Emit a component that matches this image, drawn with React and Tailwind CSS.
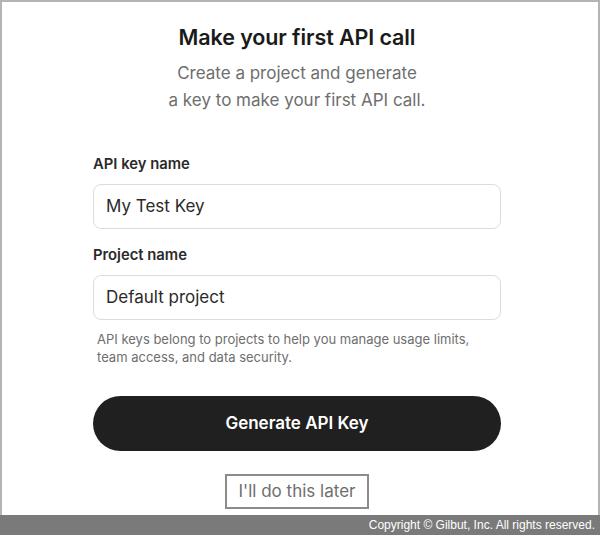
export default function App() {
  return (
    <div className="w-[600px] h-[535px] flex flex-col bg-white" style={{ fontFamily: 'Inter, "Noto Sans", sans-serif' }}>
      <div className="flex-1 border-2 border-b-0 border-[#b4b4b4] pr-[6px] flex flex-col items-center">
        <h1 className="mt-[21px] text-[21.5px] leading-[28px] font-semibold text-[#1a1a1a] tracking-[-0.1px]">
          Make your first API call
        </h1>
        <p className="mt-[9px] text-center text-[17px] leading-[27px] text-[#6e6e6e]">
          Create a project and generate
          <br />
          a key to make your first API call.
        </p>

        <div className="w-[408px] mt-[41px] flex flex-col">
          <label className="text-[14.8px] leading-[18px] font-semibold text-[#2a2a2a]">API key name</label>
          <div className="mt-[11px] h-[45px] rounded-[8px] border border-[#dcdcdc] flex items-center px-[12px] text-[17px] text-[#2a2a2a]">
            My Test Key
          </div>

          <label className="mt-[17px] text-[14.8px] leading-[18px] font-semibold text-[#2a2a2a]">Project name</label>
          <div className="mt-[11px] h-[45px] rounded-[8px] border border-[#dcdcdc] flex items-center px-[12px] text-[17px] text-[#2a2a2a]">
            Default project
          </div>

          <p className="mt-[10px] px-[4px] text-[13px] leading-[18px] text-[#6e6e6e]">
            API keys belong to projects to help you manage usage limits,
            <br />
            team access, and data security.
          </p>

          <button className="mt-[30px] h-[55px] rounded-full bg-[#202020] text-white text-[17px] font-semibold">
            Generate API Key
          </button>
        </div>

        <button className="mt-[23px] w-[144px] h-[35px] border-2 border-[#8c8c8c] text-[17px] text-[#6e6e6e]">
          I'll do this later
        </button>
      </div>
      <div className="h-[20px] shrink-0 bg-[#7a7a7a] flex items-center justify-end pr-[5px] text-[12px] text-white" style={{ fontFamily: '"Liberation Sans", Arial, sans-serif' }}>
        Copyright © Gilbut, Inc. All rights reserved.
      </div>
    </div>
  );
}
